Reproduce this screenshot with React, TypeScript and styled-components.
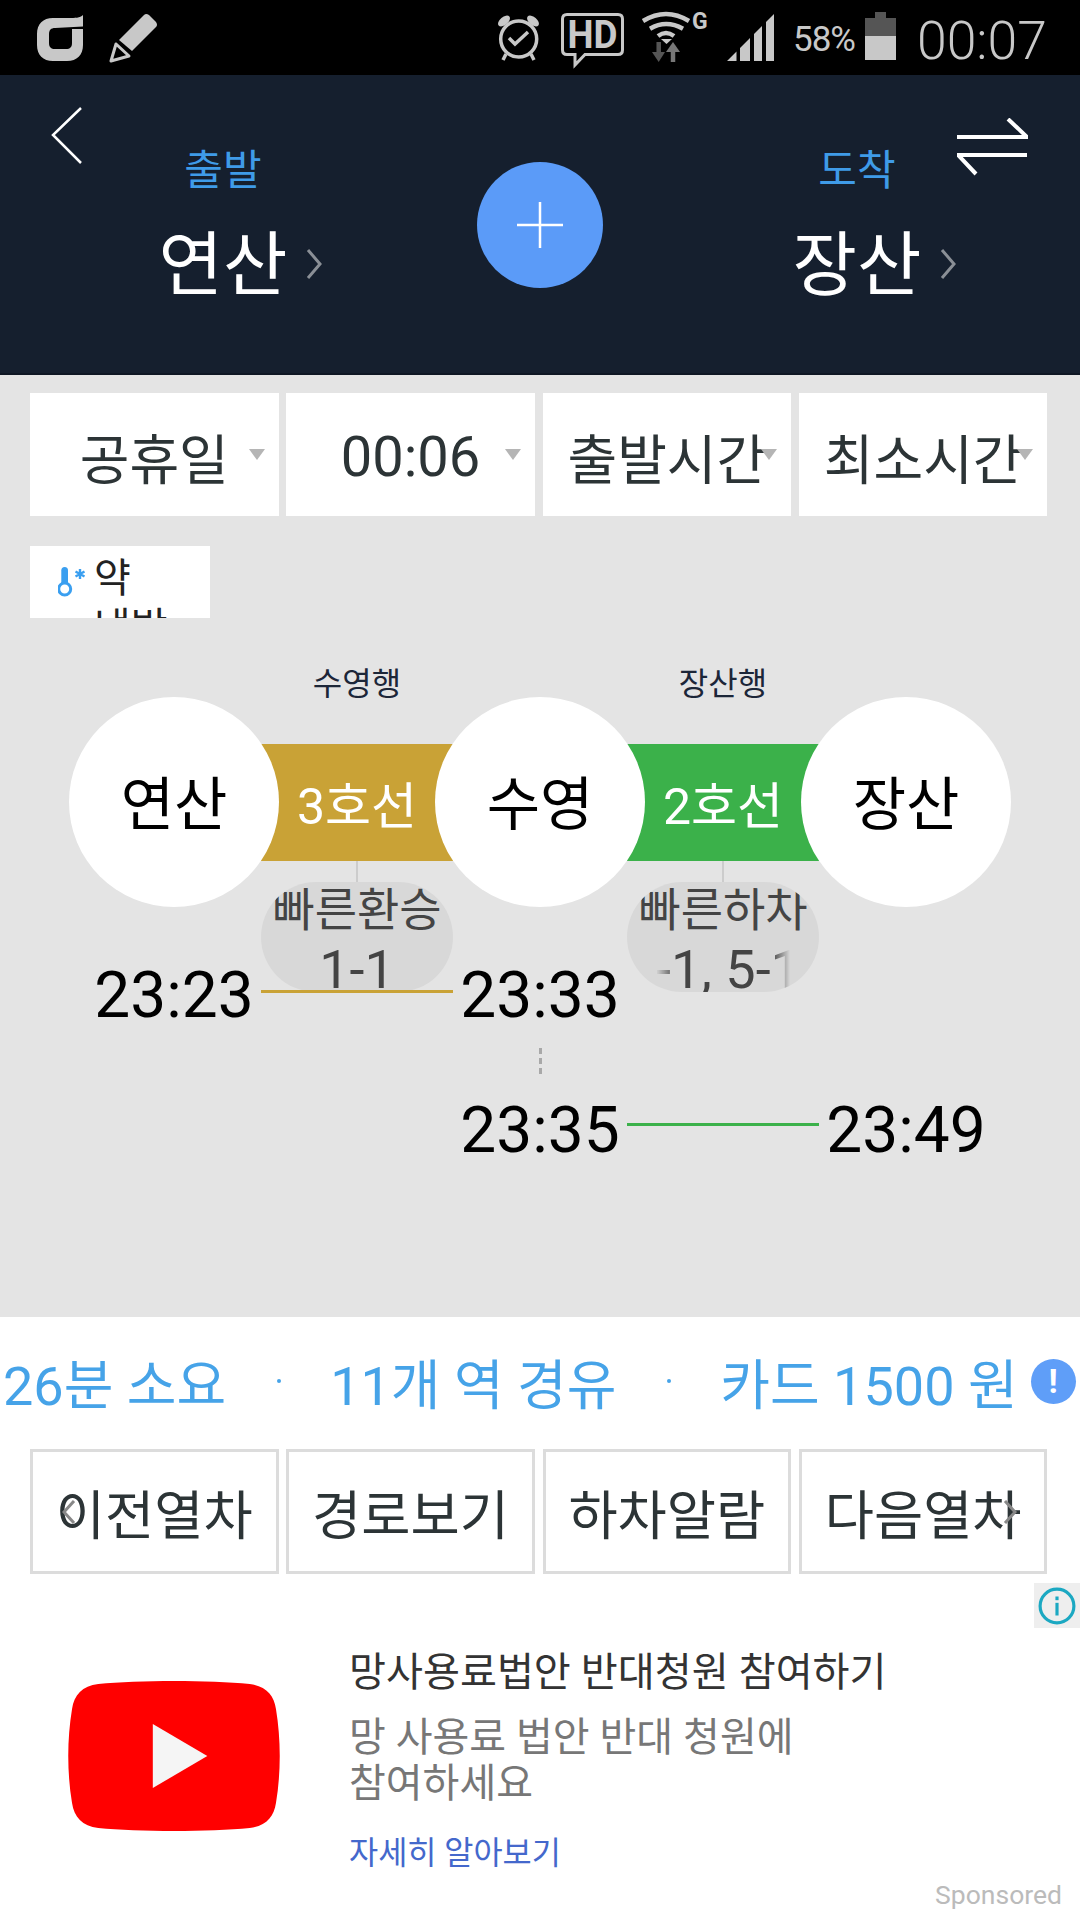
import styled, { createGlobalStyle } from 'styled-components';

const GlobalStyle = createGlobalStyle`
    html, body {
        margin: 0;
        padding: 0;
        width: 1080px;
        height: 1920px;
        overflow: hidden;
        background: #fff;
        font-family: Roboto, "Noto Sans CJK KR", sans-serif;
    }
    * { box-sizing: border-box; }
`;

const Page = styled.div`
    width: 1080px;
    height: 1920px;
    display: flex;
    flex-direction: column;
    overflow: hidden;
`;

/* status bar */
const StatusBar = styled.div`
    height: 75px;
    background: #000;
    display: flex;
    align-items: flex-start;
    color: #c8c8c8;
`;

const StatusIcon = styled.svg<{ $left: number; $top: number }>`
    display: block;
    flex: none;
    overflow: visible;
    margin-left: ${p => p.$left}px;
    margin-top: ${p => p.$top}px;
`;

const Battery = styled.span`
    font-size: 35px;
    line-height: 40px;
    margin-top: 20px;
    margin-left: 19px;
    width: 63px;
    letter-spacing: -1px;
    white-space: nowrap;
`;

const Clock = styled.span`
    font-size: 53.5px;
    font-weight: 300;
    line-height: 60px;
    margin-top: 11px;
    margin-left: 21px;
`;

/* header */
const Header = styled.div`
    height: 300px;
    background: #151f2e;
    border-bottom: 2px solid #0f1724;
    display: grid;
    grid-template-columns: 123px 200px 434px 200px 123px;
`;

const BackIcon = styled.svg`
    display: block;
    margin: 32px 0 0 51px;
`;

const SwapIcon = styled.svg`
    display: block;
    margin: 43px 0 0 0;
`;

const StationPick = styled.div`
    display: flex;
    flex-direction: column;
    align-items: center;
    padding-top: 73px;
`;

const PickLabel = styled.div`
    color: #3f9be8;
    font-size: 42px;
    line-height: 46px;
`;

const PickName = styled.div`
    position: relative;
    color: #fff;
    font-size: 70px;
    line-height: 90px;
    margin-top: 27px;
`;

const PickChevron = styled.svg`
    position: absolute;
    left: 100%;
    top: 28px;
    margin-left: 19px;
`;

const AddWrap = styled.div`
    display: flex;
    justify-content: center;
    padding-top: 87px;
`;

const AddButton = styled.div`
    width: 126px;
    height: 126px;
    border-radius: 50%;
    background: #5b9bf8;
    display: flex;
    align-items: center;
    justify-content: center;
`;

/* grey body */
const Body = styled.div`
    height: 942px;
    background: #e4e4e4;
    padding-top: 18px;
`;

const ButtonRow = styled.div`
    display: grid;
    grid-template-columns: repeat(4, 248.5px);
    column-gap: 7.8px;
    padding-left: 30px;
`;

const SelectBox = styled.div<{ $digits?: boolean }>`
    position: relative;
    height: 123px;
    padding-top: 4px;
    background: #fff;
    color: #2c3436;
    font-size: ${p => (p.$digits ? 56 : 54)}px;
    display: flex;
    align-items: center;
    justify-content: center;
    white-space: nowrap;
`;

const Caret = styled.span`
    position: absolute;
    right: 14px;
    top: 56px;
    width: 0;
    height: 0;
    border-left: 8px solid transparent;
    border-right: 8px solid transparent;
    border-top: 11px solid #b5b5b5;
`;

const TempBox = styled.div`
    width: 180px;
    height: 72px;
    margin: 30px 0 0 30px;
    background: #fff;
    overflow: hidden;
    display: flex;
    align-items: flex-start;
`;

const TempIcon = styled.svg`
    display: block;
    flex: none;
    margin: 21px 0 0 28px;
`;

const TempText = styled.div`
    width: 80px;
    margin-left: 8px;
    margin-top: 8px;
    font-size: 40px;
    line-height: 49px;
    color: #222;
`;

const ROUTE_COLUMNS = '210px 156px 210px 156px 210px';

const RouteRow = styled.div<{ $top?: number }>`
    display: grid;
    grid-template-columns: ${ROUTE_COLUMNS};
    padding-left: 69px;
    margin-top: ${p => p.$top ?? 0}px;
`;

const Direction = styled.div<{ $col: number }>`
    grid-column: ${p => p.$col};
    text-align: center;
    font-size: 32px;
    line-height: 26px;
    padding-top: 1px;
    color: #1c2638;
`;

const Circle = styled.div`
    position: relative;
    z-index: 2;
    width: 210px;
    height: 210px;
    padding-bottom: 5px;
    border-radius: 50%;
    background: #fff;
    color: #000;
    font-size: 58px;
    display: flex;
    align-items: center;
    justify-content: center;
`;

const Segment = styled.div`
    margin: 0 -18px;
    padding-top: 47px;
    display: flex;
    flex-direction: column;
    align-items: center;
`;

const Band = styled.div<{ $color: string }>`
    width: 100%;
    height: 117px;
    padding-bottom: 2px;
    background: ${p => p.$color};
    color: #fff;
    font-size: 50px;
    display: flex;
    align-items: center;
    justify-content: center;
`;

const Connector = styled.div`
    width: 2px;
    height: 21px;
    background: #cccccc;
`;

const Bubble = styled.div`
    width: 100%;
    height: 110px;
    border-radius: 58px;
    background: #d8d8d8;
    color: #444;
    display: flex;
    flex-direction: column;
    align-items: center;
    overflow: hidden;
`;

const BubbleTitle = styled.div`
    font-size: 46px;
    line-height: 56px;
    white-space: nowrap;
`;

const BubbleCars = styled.div`
    width: 134px;
    margin-top: 3px;
    font-size: 54px;
    line-height: 58px;
    white-space: nowrap;
    overflow: hidden;
    text-align: center;
`;

const BubbleCarsFaded = styled(BubbleCars)`
    text-align: left;
    mask-image: linear-gradient(to right, transparent 0, #000 20px, #000 116px, transparent 134px);
`;

const Time = styled.div<{ $col: number }>`
    position: relative;
    z-index: 3;
    grid-column: ${p => p.$col};
    font-size: 64px;
    line-height: 66px;
    color: #000;
    text-align: center;
`;

const LegLine = styled.div<{ $color: string; $col: number; $top: number }>`
    position: relative;
    z-index: 3;
    grid-column: ${p => p.$col};
    height: 3px;
    margin: ${p => p.$top}px -18px 0;
    background: ${p => p.$color};
`;

const Dots = styled.div`
    grid-column: 3;
    justify-self: center;
    width: 3px;
    height: 26px;
    background: repeating-linear-gradient(to bottom, #a8a8a8 0 6px, transparent 6px 10px);
`;

/* summary */
const Summary = styled.div`
    display: flex;
    align-items: center;
    height: 70px;
    margin-top: 29px;
    padding-left: 3px;
    color: #46a3e8;
    font-size: 54px;
    white-space: nowrap;
`;

const SummaryDot = styled.span`
    width: 4px;
    height: 4px;
    border-radius: 50%;
    background: #46a3e8;
    margin: 0 49px 0 51px;
`;

const InfoBadge = styled.span`
    width: 45px;
    height: 45px;
    margin-left: 13px;
    border-radius: 50%;
    background: #5f9ef8;
    color: #fff;
    font-size: 34px;
    font-weight: 700;
    display: flex;
    align-items: center;
    justify-content: center;
`;

const Actions = styled(ButtonRow)`
    margin-top: 33px;
`;

const ActionButton = styled.div`
    position: relative;
    height: 125px;
    background: #fff;
    border: 3px solid #dcdcdc;
    color: #2c3436;
    font-size: 53.5px;
    display: flex;
    align-items: center;
    justify-content: center;
    white-space: nowrap;
`;

const ActionChevron = styled.svg<{ $side: 'left' | 'right' }>`
    position: absolute;
    top: 48px;
    ${p => p.$side}: ${p => (p.$side === 'left' ? 29 : 27)}px;
`;

/* ad */
const Ad = styled.div`
    position: relative;
    flex: 1;
    display: grid;
    grid-template-columns: 349px 1fr;
`;

const AdLogo = styled.svg`
    display: block;
    margin: 107px 0 0 68px;
`;

const AdText = styled.div`
    padding-top: 73px;
    display: flex;
    flex-direction: column;
`;

const AdTitle = styled.div`
    font-size: 40.2px;
    line-height: 52px;
    color: #333;
`;

const AdDesc = styled.div`
    font-size: 40px;
    line-height: 46px;
    color: #777;
    margin-top: 16px;
    width: 470px;
`;

const AdLink = styled.div`
    font-size: 31.7px;
    line-height: 40px;
    color: #4468cc;
    margin-top: 27px;
`;

const AdInfo = styled.div`
    position: absolute;
    top: 9px;
    right: 0;
    width: 46px;
    height: 45px;
    background: #eeeeee;
    display: flex;
    align-items: center;
    justify-content: center;
`;

const Sponsored = styled.div`
    position: absolute;
    right: 18px;
    bottom: 8px;
    font-size: 26.5px;
    line-height: 34px;
    color: #bbbbbb;
`;

const App = () => {
    return (
        <Page>
            <GlobalStyle />
            <StatusBar>
                <StatusIcon $left={37} $top={15} width="46" height="46" viewBox="0 0 46 46">
                    <path d="M46 0 V11.5 L18 13 C14 13 12 15 12 19 V28 C12 32 14 34 18 34 H29 C33 34 35 32 35 28 V14 H46 V30 C46 40 40 46 30 46 H16 C6 46 0 40 0 30 V19 C0 9 6 3 16 3 H32 C38 3 43 3 46 0 Z" fill="#c8c8c8" />
                </StatusIcon>
                <StatusIcon $left={25} $top={14} width="50" height="49" viewBox="0 0 50 49">
                    <path d="M36 1 Q38 -1 41 1 L48 8 Q50 11 48 13 L24 37 L11 26 Z" fill="#c8c8c8" />
                    <path d="M8 30 L21 42 L3 47 Z" fill="#000" stroke="#c8c8c8" strokeWidth="3" strokeLinejoin="round" />
                </StatusIcon>
                <StatusIcon $left={339} $top={14} width="44" height="47" viewBox="0 0 44 47">
                    <circle cx="21.7" cy="25" r="18" fill="none" stroke="#c8c8c8" strokeWidth="3.5" />
                    <path d="M12 24 L18 30 L31 18" fill="none" stroke="#c8c8c8" strokeWidth="3.5" />
                    <ellipse cx="7" cy="7" rx="7" ry="4" transform="rotate(-40 7 7)" fill="#c8c8c8" />
                    <ellipse cx="36" cy="7" rx="7" ry="4" transform="rotate(40 36 7)" fill="#c8c8c8" />
                    <path d="M9 40 L6 46 M34 40 L37 46" stroke="#c8c8c8" strokeWidth="3.5" />
                </StatusIcon>
                <StatusIcon $left={20} $top={13} width="63" height="54" viewBox="0 0 63 54">
                    <path d="M6 1.5 H57 Q61.5 1.5 61.5 6 V37 Q61.5 41.5 57 41.5 H24 L14 52 V41.5 H6 Q1.5 41.5 1.5 37 V6 Q1.5 1.5 6 1.5 Z" fill="none" stroke="#c8c8c8" strokeWidth="3" />
                    <text x="31.5" y="35" textAnchor="middle" fill="#c8c8c8" fontFamily="Roboto" fontWeight="700" fontSize="38" textLength="50" lengthAdjust="spacingAndGlyphs">HD</text>
                </StatusIcon>
                <StatusIcon $left={18} $top={12} width="64" height="50" viewBox="0 0 64 50">
                    <path d="M1 9 Q24 -5 47 9 M8 16.7 Q24 7.3 41 16.7 M16 24 Q24 18 32 24" fill="none" stroke="#c8c8c8" strokeWidth="4.5" />
                    <path d="M19 27 H30 L24.5 32 Z" fill="#c8c8c8" />
                    <path d="M16.7 30 V42" stroke="#555" strokeWidth="4.5" />
                    <path d="M10 40 H23 L16.7 50 Z" fill="#555" />
                    <path d="M31 38 V50" stroke="#777" strokeWidth="4.5" />
                    <path d="M24 40 H38 L31 30 Z" fill="#777" />
                    <text x="50" y="17" fill="#c8c8c8" fontFamily="Roboto" fontWeight="700" fontSize="23">G</text>
                </StatusIcon>
                <StatusIcon $left={21} $top={14} width="47" height="47" viewBox="0 0 47 47">
                    <path d="M0 47 L9.5 37.5 V47 Z M13 34 L23 24 V47 H13 Z M27 20 L35 12 V47 H27 Z M39 8 L47 0 V47 H39 Z" fill="#c8c8c8" />
                </StatusIcon>
                <Battery>58%</Battery>
                <StatusIcon $left={9} $top={12} width="31" height="48" viewBox="0 0 31 48">
                    <rect x="10" y="0" width="11" height="6" fill="#555" />
                    <rect x="0" y="6" width="31" height="18" fill="#555" />
                    <rect x="0" y="24" width="31" height="24" fill="#c8c8c8" />
                </StatusIcon>
                <Clock>00:07</Clock>
            </StatusBar>

            <Header>
                <div>
                    <BackIcon width="32" height="58" viewBox="0 0 32 58">
                        <path d="M30 1 L2 28 L30 56" fill="none" stroke="#fff" strokeWidth="2.5" />
                    </BackIcon>
                </div>
                <StationPick>
                    <PickLabel>출발</PickLabel>
                    <PickName>
                        연산
                        <PickChevron width="16" height="30" viewBox="0 0 16 30">
                            <path d="M2 1 L14 15 L2 29" fill="none" stroke="#8a8f96" strokeWidth="3" />
                        </PickChevron>
                    </PickName>
                </StationPick>
                <AddWrap>
                    <AddButton>
                        <svg width="46" height="46" viewBox="0 0 46 46">
                            <path d="M23 0 V46 M0 23 H46" stroke="#fff" strokeWidth="2.5" />
                        </svg>
                    </AddButton>
                </AddWrap>
                <StationPick>
                    <PickLabel>도착</PickLabel>
                    <PickName>
                        장산
                        <PickChevron width="16" height="30" viewBox="0 0 16 30">
                            <path d="M2 1 L14 15 L2 29" fill="none" stroke="#8a8f96" strokeWidth="3" />
                        </PickChevron>
                    </PickName>
                </StationPick>
                <div>
                    <SwapIcon width="71" height="58" viewBox="0 0 71 58">
                        <path d="M0 19 H70 L51 1" fill="none" stroke="#fff" strokeWidth="4" />
                        <path d="M70 37 H1 L19 56" fill="none" stroke="#fff" strokeWidth="4" />
                    </SwapIcon>
                </div>
            </Header>

            <Body>
                <ButtonRow>
                    <SelectBox>공휴일<Caret /></SelectBox>
                    <SelectBox $digits>00:06<Caret /></SelectBox>
                    <SelectBox>출발시간<Caret /></SelectBox>
                    <SelectBox>최소시간<Caret /></SelectBox>
                </ButtonRow>

                <TempBox>
                    <TempIcon width="28" height="30" viewBox="0 0 28 30">
                        <path d="M3.3 17 V3.5 Q3.3 0 6.7 0 Q10 0 10 3.5 V17 Z" fill="#3a9ff0" />
                        <circle cx="6.7" cy="22" r="6" fill="#fff" stroke="#3a9ff0" strokeWidth="3" />
                        <path d="M22 2 V12 M17.5 4.5 L26.5 9.5 M26.5 4.5 L17.5 9.5" stroke="#3a9ff0" strokeWidth="2.4" />
                    </TempIcon>
                    <TempText>약 냉방</TempText>
                </TempBox>

                <RouteRow $top={52}>
                    <Direction $col={2}>수영행</Direction>
                    <Direction $col={4}>장산행</Direction>
                </RouteRow>

                <RouteRow>
                    <Circle>연산</Circle>
                    <Segment>
                        <Band $color="#c9a236">3호선</Band>
                        <Connector />
                        <Bubble>
                            <BubbleTitle>빠른환승</BubbleTitle>
                            <BubbleCars>1-1</BubbleCars>
                        </Bubble>
                    </Segment>
                    <Circle>수영</Circle>
                    <Segment>
                        <Band $color="#3bb14a">2호선</Band>
                        <Connector />
                        <Bubble>
                            <BubbleTitle>빠른하차</BubbleTitle>
                            <BubbleCarsFaded>-1, 5-1</BubbleCarsFaded>
                        </Bubble>
                    </Segment>
                    <Circle>장산</Circle>
                </RouteRow>

                <RouteRow $top={-29}>
                    <Time $col={1}>23:23</Time>
                    <LegLine $col={2} $top={27} $color="#c9a236" />
                    <Time $col={3}>23:33</Time>
                </RouteRow>

                <RouteRow $top={19}>
                    <Dots />
                </RouteRow>

                <RouteRow $top={24}>
                    <Time $col={3}>23:35</Time>
                    <LegLine $col={4} $top={25} $color="#3bb14a" />
                    <Time $col={5}>23:49</Time>
                </RouteRow>
            </Body>

            <Summary>
                <span>26분 소요</span>
                <SummaryDot />
                <span>11개 역 경유</span>
                <SummaryDot />
                <span>카드 1500 원</span>
                <InfoBadge>!</InfoBadge>
            </Summary>

            <Actions>
                <ActionButton>
                    이전열차
                    <ActionChevron $side="left" width="14" height="24" viewBox="0 0 14 24">
                        <path d="M12 1 L2 12 L12 23" fill="none" stroke="#888" strokeWidth="3" />
                    </ActionChevron>
                </ActionButton>
                <ActionButton>경로보기</ActionButton>
                <ActionButton>하차알람</ActionButton>
                <ActionButton>
                    다음열차
                    <ActionChevron $side="right" width="14" height="24" viewBox="0 0 14 24">
                        <path d="M2 1 L12 12 L2 23" fill="none" stroke="#888" strokeWidth="3" />
                    </ActionChevron>
                </ActionButton>
            </Actions>

            <Ad>
                <AdLogo width="212" height="150" viewBox="0 0 210 150" preserveAspectRatio="none">
                    <path d="M30 3 C70 -1 140 -1 180 3 C196 5 204 14 206 28 C211 58 211 92 206 122 C204 136 196 145 180 147 C140 151 70 151 30 147 C14 145 6 136 4 122 C-1 92 -1 58 4 28 C6 14 14 5 30 3 Z" fill="#ff0000" />
                    <path d="M84 43 L138 75 L84 107 Z" fill="#f5f5f5" />
                </AdLogo>
                <AdText>
                    <AdTitle>망사용료법안 반대청원 참여하기</AdTitle>
                    <AdDesc>망 사용료 법안 반대 청원에 참여하세요</AdDesc>
                    <AdLink>자세히 알아보기</AdLink>
                </AdText>
                <AdInfo>
                    <svg width="38" height="38" viewBox="0 0 36 36">
                        <circle cx="18" cy="18" r="16" fill="none" stroke="#1ba8c2" strokeWidth="3" />
                        <rect x="16.5" y="15" width="3" height="12" fill="#1ba8c2" />
                        <rect x="16.5" y="9" width="3" height="3.5" fill="#1ba8c2" />
                    </svg>
                </AdInfo>
                <Sponsored>Sponsored</Sponsored>
            </Ad>
        </Page>
    );
};

export default App;
